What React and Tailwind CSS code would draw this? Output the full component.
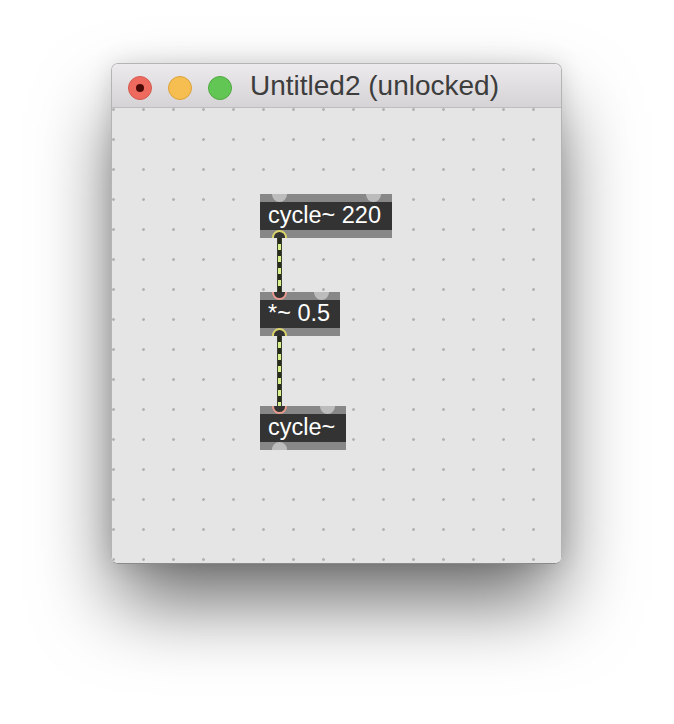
export default function App() {
  const cord =
    "absolute w-[5px] border-x border-[#3b4030] bg-[repeating-linear-gradient(to_bottom,#262b1c_0px,#262b1c_6px,#d8f08a_6px,#d8f08a_12px)]";
  return (
    <div
      className="w-[674px] h-[724px] bg-white pt-[63px] pl-[111px]"
      style={{ fontFamily: '"Liberation Sans", Arial, sans-serif' }}
    >
      <div className="w-[451px] h-[501px] rounded-[7px] border border-[#b4b4b4] border-b-[#8a8a8a] shadow-[0_42px_80px_-6px_rgba(0,0,0,0.6),0_0_24px_rgba(0,0,0,0.12)] overflow-hidden flex flex-col">
        {/* title bar */}
        <div className="h-[44px] shrink-0 flex items-start pl-[16px] bg-gradient-to-b from-[#eceaec] to-[#d5d3d5] border-b border-[#bebcbe]">
          <div className="mt-[12px] flex gap-[16px]">
            <div className="w-[24px] h-[24px] rounded-full bg-[#ee6a5f] border border-[#d65a4e] flex items-center justify-center">
              <div className="w-[8px] h-[8px] rounded-full bg-[#4a0a06]" />
            </div>
            <div className="w-[24px] h-[24px] rounded-full bg-[#f6be50] border border-[#dca23b]" />
            <div className="w-[24px] h-[24px] rounded-full bg-[#62c655] border border-[#50a940]" />
          </div>
          <div className="mt-[8px] ml-[18px] text-[28px] leading-none text-[#3d3d3d] whitespace-nowrap">
            Untitled2 (unlocked)
          </div>
        </div>
        {/* canvas */}
        <div className="relative flex-1 bg-[#e5e5e5] bg-[radial-gradient(circle_at_1.5px_1.5px,#b3b3b3_1.3px,transparent_1.5px)] bg-[length:30px_30px]">
          {/* cords */}
          <div className={cord + " left-[165px] top-[130px] h-[54px]"} />
          <div className={cord + " left-[165px] top-[228px] h-[70px]"} />

          {/* cycle~ 220 */}
          <div className="absolute left-[148px] top-[86px] w-[132px] h-[44px] flex flex-col overflow-hidden">
            <div className="h-[8px] bg-[#878787]" />
            <div className="h-[28px] bg-[#333333] flex items-center pl-[8px] text-white text-[23.5px] leading-none whitespace-nowrap">
              cycle~ 220
            </div>
            <div className="h-[8px] bg-[#878787]" />
            <div className="absolute left-[12px] -top-[7px] w-[15px] h-[15px] rounded-full bg-[#bcbcbc]" />
            <div className="absolute right-[11px] -top-[7px] w-[15px] h-[15px] rounded-full bg-[#bcbcbc]" />
            <div className="absolute left-[12px] -bottom-[7px] w-[15px] h-[15px] rounded-full bg-[#333333] border-2 border-[#d9d36c]" />
          </div>

          {/* *~ 0.5 */}
          <div className="absolute left-[148px] top-[184px] w-[80px] h-[44px] flex flex-col overflow-hidden">
            <div className="h-[8px] bg-[#878787]" />
            <div className="h-[28px] bg-[#333333] flex items-center pl-[8px] text-white text-[23.5px] leading-none whitespace-nowrap">
              *~ 0.5
            </div>
            <div className="h-[8px] bg-[#878787]" />
            <div className="absolute left-[12px] -top-[7px] w-[15px] h-[15px] rounded-full bg-[#333333] border-2 border-[#e99a8d]" />
            <div className="absolute right-[11px] -top-[7px] w-[15px] h-[15px] rounded-full bg-[#bcbcbc]" />
            <div className="absolute left-[12px] -bottom-[7px] w-[15px] h-[15px] rounded-full bg-[#333333] border-2 border-[#d9d36c]" />
          </div>

          {/* cycle~ */}
          <div className="absolute left-[148px] top-[298px] w-[86px] h-[44px] flex flex-col overflow-hidden">
            <div className="h-[8px] bg-[#878787]" />
            <div className="h-[28px] bg-[#333333] flex items-center pl-[8px] text-white text-[23.5px] leading-none whitespace-nowrap">
              cycle~
            </div>
            <div className="h-[8px] bg-[#878787]" />
            <div className="absolute left-[12px] -top-[7px] w-[15px] h-[15px] rounded-full bg-[#333333] border-2 border-[#e99a8d]" />
            <div className="absolute right-[11px] -top-[7px] w-[15px] h-[15px] rounded-full bg-[#bcbcbc]" />
            <div className="absolute left-[12px] -bottom-[7px] w-[15px] h-[15px] rounded-full bg-[#bcbcbc]" />
          </div>
        </div>
      </div>
    </div>
  );
}
